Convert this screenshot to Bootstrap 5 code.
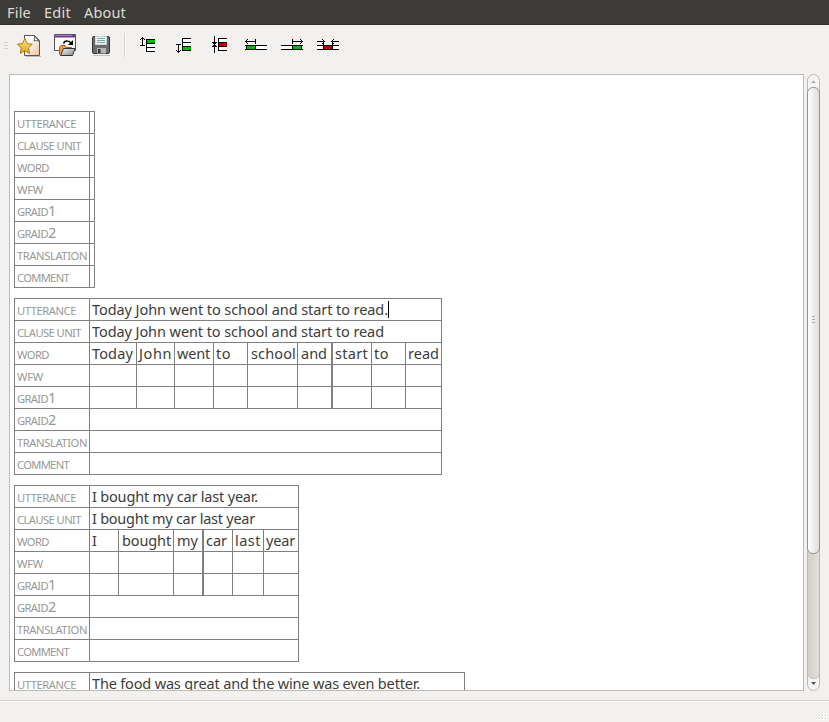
<!DOCTYPE html>
<html lang="en">
<head>
<meta charset="utf-8">
<title>Annotation editor</title>
<link rel="stylesheet" href="https://cdn.jsdelivr.net/npm/bootstrap@5.3.0/dist/css/bootstrap.min.css">
<style>
html,body{height:100%}
body{background:#f2f1f0;font-family:"Noto Sans","Open Sans",sans-serif;font-size:14.5px;color:#3c3c3c;overflow:hidden}
.menubar{height:25px;background:#3c3b37;border-bottom:1px solid #33322e;padding-left:7px;gap:13px;color:#dfdbd2}
.menubar a{line-height:25px;font-size:14.5px}
.toolstrip{height:49px;flex:none;padding:0}
.toolstrip svg{display:block}
.work{height:617px;flex:none;padding-left:9px;gap:3px}
.sheet{width:795px;height:617px;background:#fff;border:1px solid #bfbbb5;padding:36px 0 0 4px;overflow:hidden}
.ann{table-layout:fixed;border-collapse:separate;border-spacing:0;border-right:1px solid #808080;border-bottom:1px solid #808080;margin-bottom:10px}
.ann td,.ann th{height:22px;padding:0 0 0 2px;border-left:1px solid #808080;border-top:1px solid #808080;line-height:21px;white-space:nowrap;font-weight:400;vertical-align:top}
.ann th{color:#989898;font-size:11.2px}
.ann th span{display:inline-block;height:21px;line-height:23px;vertical-align:top}
.ann th .dig{font-size:14.5px;line-height:21px}
.ann td span{display:inline-block;height:21px;line-height:21px;vertical-align:top}
.ann td.dbl{border-left-width:2px}
.ann td.in{padding-left:3px}
.ann td .caret{width:1px;height:17px;background:#000;margin:2px 0 0 0}
.wlab{width:75px}
.statusline{margin-top:9px;border-top:1px solid #d6d3cf;box-shadow:inset 0 1px #fff;flex:1}
</style>
</head>
<body class="d-flex flex-column">
<nav class="menubar d-flex flex-shrink-0">
<a class="text-reset text-decoration-none"><span data-w="24">File</span></a>
<a class="text-reset text-decoration-none"><span data-w="27">Edit</span></a>
<a class="text-reset text-decoration-none"><span data-w="42">About</span></a>
</nav>
<div class="toolstrip">
<svg width="360" height="49" viewBox="0 25 360 49">
<defs>
<linearGradient id="pg" x1="0" y1="0" x2="1" y2="1"><stop offset=".3" stop-color="#fff"/><stop offset="1" stop-color="#f0bd98"/></linearGradient>
<linearGradient id="st" x1="0" y1="0" x2="0" y2="1"><stop offset="0" stop-color="#fbe88a"/><stop offset="1" stop-color="#e3a51c"/></linearGradient>
<linearGradient id="fo" x1="0" y1="0" x2="1" y2="1"><stop offset="0" stop-color="#f4f4f4"/><stop offset="1" stop-color="#888"/></linearGradient>
</defs>
<path d="M4 42.500h4M4 45.500h4M4 48.500h4" stroke="#d3d0cc"/>
<path d="M26 56.500H41" stroke="#bbb"/>
<path d="M24.500 35.500H34.500L39.500 40.500V55.500H24.500Z" fill="url(#pg)" stroke="#555"/>
<path d="M34 35.500Q35.500 38 34 41Q37 39.500 39.500 41.500Z" fill="#fff" stroke="#555" stroke-width=".9"/>
<path d="M24.900 38.200L27.200 43.600L32.300 44.200L28.400 48L29.800 53.300L24.900 50.800L20.200 53.300L21.200 48L17.400 44.200L22.500 43.600Z" fill="url(#st)" stroke="#ad7f12"/>
<path d="M54.500 34.500H75.500V50.500H54.500Z" fill="#fdfcf5" stroke="#555"/>
<path d="M55 35H75V37.500H55Z" fill="#6a3d92"/><path d="M55 35.500H72" stroke="#a77bca"/>
<path d="M63.500 43.500C64.500 40 69 40 71.500 43.500" fill="none" stroke="#000" stroke-width="1.500"/><path d="M73 40V45H68Z"/>
<path d="M59.500 54.500V47.500L61 45.500H65L66.500 47.500H71.500V50" fill="#f29b4b" stroke="#ad5c17"/>
<path d="M60.500 55.500L63.500 48.500H75L72.500 55.500Z" fill="url(#fo)" stroke="#333"/>
<path d="M93 55.500H110" stroke="#c4c2c0"/>
<rect x="92.500" y="36.500" width="17" height="17" rx="1.500" fill="#6a6a6a" stroke="#333"/>
<rect x="95.500" y="36.500" width="11" height="8" fill="#f1f5f4" stroke="#ddd" stroke-width=".8"/>
<path d="M97 38.500h8M97 40.500h8M97 42.500h8" stroke="#6fa9aa"/>
<rect x="97" y="48" width="9" height="5.500" fill="#b5b5b5"/><rect x="98" y="49" width="2.500" height="4" fill="#333"/>
<path d="M124.500 33V57" stroke="#d8d5d1"/><path d="M125.500 33V57" stroke="#fafafa"/>
<g shape-rendering="crispEdges">
<!-- insert row above -->
<path d="M147 40h8v11h-8z" fill="#fff"/><path d="M147 40h8v3h-8z" fill="#00b800"/>
<path d="M146 39h9v1h-9zM146 43h9v1h-9zM146 47h9v1h-9zM146 51h9v1h-9zM146 39h1v13h-1zM142 37h1v9h-1zM140 45h5v1h-5zM141 38h3v1h-3zM140 39h1v1h-1zM144 39h1v1h-1z"/>
<!-- insert row below -->
<path d="M183 39h8v11h-8z" fill="#fff"/><path d="M183 47h8v3h-8z" fill="#00b800"/>
<path d="M182 38h9v1h-9zM182 42h9v1h-9zM182 46h9v1h-9zM182 50h9v1h-9zM182 38h1v13h-1zM178 44h1v9h-1zM176 44h5v1h-5zM177 51h3v1h-3zM176 50h1v1h-1zM180 50h1v1h-1z"/>
<!-- delete row -->
<path d="M219 39h8v11h-8z" fill="#fff"/><path d="M219 43h8v3h-8z" fill="#c00000"/>
<path d="M218 38h9v1h-9zM218 42h9v1h-9zM212 42h5v1h-5zM218 46h9v1h-9zM212 46h5v1h-5zM218 50h9v1h-9zM218 38h1v13h-1zM214 36h1v17h-1zM213 43h3v1h-3zM213 45h3v1h-3z"/>
<!-- insert column before -->
<path d="M246 46h21v3h-21z" fill="#fff"/><path d="M247 46h8v3h-8z" fill="#00b800"/>
<path d="M245 45h22v1h-22zM245 49h22v1h-22zM246 45h1v5h-1zM255 45h1v5h-1zM245 41h11v1h-11zM255 39h1v5h-1zM246 40h1v3h-1zM247 39h1v1h-1zM247 43h1v1h-1z"/>
<!-- insert column after -->
<path d="M281 46h21v3h-21z" fill="#fff"/><path d="M293 46h8v3h-8z" fill="#00b800"/>
<path d="M281 45h22v1h-22zM281 49h22v1h-22zM292 45h1v5h-1zM301 45h1v5h-1zM292 41h11v1h-11zM292 39h1v5h-1zM301 40h1v3h-1zM300 39h1v1h-1zM300 43h1v1h-1z"/>
<!-- delete column -->
<path d="M317 46h22v3h-22z" fill="#fff"/><path d="M324 46h8v3h-8z" fill="#c00000"/>
<path d="M317 45h22v1h-22zM317 49h22v1h-22zM323 41h1v9h-1zM332 41h1v9h-1zM317 41h8v1h-8zM331 41h8v1h-8zM323 40h1v3h-1zM322 39h1v1h-1zM322 43h1v1h-1zM332 40h1v3h-1zM333 39h1v1h-1zM333 43h1v1h-1z"/>
</g>
</svg>
</div>
<main class="work d-flex">
<div class="sheet">
<table class="ann" style="width:81px"><colgroup><col class="wlab"><col style="width:5px"></colgroup>
<tr><th><span data-w="59">UTTERANCE</span></th><td></td></tr>
<tr><th><span data-w="64">CLAUSE UNIT</span></th><td></td></tr>
<tr><th><span data-w="32">WORD</span></th><td></td></tr>
<tr><th><span data-w="26">WFW</span></th><td></td></tr>
<tr><th><span data-w="31">GRAID</span><span class="dig" data-w="8">1</span></th><td></td></tr>
<tr><th><span data-w="31">GRAID</span><span class="dig" data-w="8">2</span></th><td></td></tr>
<tr><th><span data-w="70">TRANSLATION</span></th><td></td></tr>
<tr><th><span data-w="52">COMMENT</span></th><td></td></tr>
</table>
<table class="ann" style="width:428px"><colgroup><col class="wlab"><col style="width:47px"><col style="width:38px"><col style="width:39px"><col style="width:34px"><col style="width:50px"><col style="width:34px"><col style="width:40px"><col style="width:34px"><col style="width:36px"></colgroup>
<tr><th><span data-w="59">UTTERANCE</span></th><td colspan="9"><span data-w="296">Today John went to school and start to read.</span><span class="caret"></span></td></tr>
<tr><th><span data-w="64">CLAUSE UNIT</span></th><td colspan="9"><span data-w="292">Today John went to school and start to read</span></td></tr>
<tr><th><span data-w="32">WORD</span></th><td><span data-w="41">Today</span></td><td><span data-w="33">John</span></td><td><span data-w="33">went</span></td><td><span data-w="15">to</span></td><td class="in"><span data-w="45">school</span></td><td class="in"><span data-w="26">and</span></td><td class="dbl"><span data-w="33">start</span></td><td><span data-w="15">to</span></td><td><span data-w="31">read</span></td></tr>
<tr><th><span data-w="26">WFW</span></th><td></td><td></td><td></td><td></td><td></td><td></td><td class="dbl"></td><td></td><td></td></tr>
<tr><th><span data-w="31">GRAID</span><span class="dig" data-w="8">1</span></th><td></td><td></td><td></td><td></td><td></td><td></td><td class="dbl"></td><td></td><td></td></tr>
<tr><th><span data-w="31">GRAID</span><span class="dig" data-w="8">2</span></th><td colspan="9"></td></tr>
<tr><th><span data-w="70">TRANSLATION</span></th><td colspan="9"></td></tr>
<tr><th><span data-w="52">COMMENT</span></th><td colspan="9"></td></tr>
</table>
<table class="ann" style="width:285px"><colgroup><col class="wlab"><col style="width:29px"><col style="width:55px"><col style="width:29px"><col style="width:30px"><col style="width:31px"><col style="width:35px"></colgroup>
<tr><th><span data-w="59">UTTERANCE</span></th><td colspan="6"><span data-w="166">I bought my car last year.</span></td></tr>
<tr><th><span data-w="64">CLAUSE UNIT</span></th><td colspan="6"><span data-w="163">I bought my car last year</span></td></tr>
<tr><th><span data-w="32">WORD</span></th><td><span>I</span></td><td class="in"><span data-w="49">bought</span></td><td class="in"><span data-w="21">my</span></td><td class="dbl"><span data-w="21">car</span></td><td><span data-w="26">last</span></td><td><span data-w="29">year</span></td></tr>
<tr><th><span data-w="26">WFW</span></th><td></td><td></td><td></td><td class="dbl"></td><td></td><td></td></tr>
<tr><th><span data-w="31">GRAID</span><span class="dig" data-w="8">1</span></th><td></td><td></td><td></td><td class="dbl"></td><td></td><td></td></tr>
<tr><th><span data-w="31">GRAID</span><span class="dig" data-w="8">2</span></th><td colspan="6"></td></tr>
<tr><th><span data-w="70">TRANSLATION</span></th><td colspan="6"></td></tr>
<tr><th><span data-w="52">COMMENT</span></th><td colspan="6"></td></tr>
</table>
<table class="ann" style="width:451px"><colgroup><col class="wlab"><col style="width:375px"></colgroup>
<tr><th><span data-w="59">UTTERANCE</span></th><td><span data-w="328">The food was great and the wine was even better.</span></td></tr>
</table>
</div>
<svg width="14" height="617" viewBox="0 0 14 617">
<defs><linearGradient id="tr"><stop offset="0" stop-color="#d3cfcb"/><stop offset="1" stop-color="#e2dfdc"/></linearGradient>
<linearGradient id="th"><stop offset="0" stop-color="#fff"/><stop offset="1" stop-color="#dedcda"/></linearGradient></defs>
<rect x=".5" y=".5" width="12" height="616" rx="6" fill="#f5f4f3" stroke="#bcb8b3"/>
<path d="M1 470H12V598Q12 604 6.500 604Q1 604 1 598Z" fill="url(#tr)"/>
<path d="M.5 598Q.5 604.500 6.500 604.500Q12.500 604.500 12.500 598" fill="none" stroke="#bcb8b3"/>
<rect x=".5" y="13.500" width="12" height="466" rx="5.500" fill="url(#th)" stroke="#96928d"/>
<path d="M4 9L6.500 6.500L9 9Z" fill="#aaa"/><path d="M4 608H9L6.500 611Z" fill="#555"/>
<path d="M5 242.500h3M5 245.500h3M5 248.500h3" stroke="#aaa"/>
</svg>
</main>
<footer class="statusline d-flex justify-content-end align-items-end">
<svg width="14" height="14" viewBox="0 0 14 14"><path d="M10 1h2v2h-2zM7 4h2v2h-2zM10 4h2v2h-2zM4 7h2v2h-2zM7 7h2v2h-2zM10 7h2v2h-2zM1 10h2v2h-2zM4 10h2v2h-2zM7 10h2v2h-2zM10 10h2v2h-2z" fill="#fff"/><path d="M10 1h1v1h-1zM7 4h1v1h-1zM10 4h1v1h-1zM4 7h1v1h-1zM7 7h1v1h-1zM10 7h1v1h-1zM1 10h1v1h-1zM4 10h1v1h-1zM7 10h1v1h-1zM10 10h1v1h-1z" fill="#d0cdc9"/></svg>
</footer>
<script src="https://cdn.jsdelivr.net/npm/bootstrap@5.3.0/dist/js/bootstrap.bundle.min.js"></script>
<script>
document.querySelectorAll('[data-w]').forEach(function (el) {
  el.style.display = 'inline-block';
  var gap = (+el.dataset.w - el.getBoundingClientRect().width) / el.textContent.length;
  el.style.letterSpacing = gap + 'px';
});
</script>
</body>
</html>
